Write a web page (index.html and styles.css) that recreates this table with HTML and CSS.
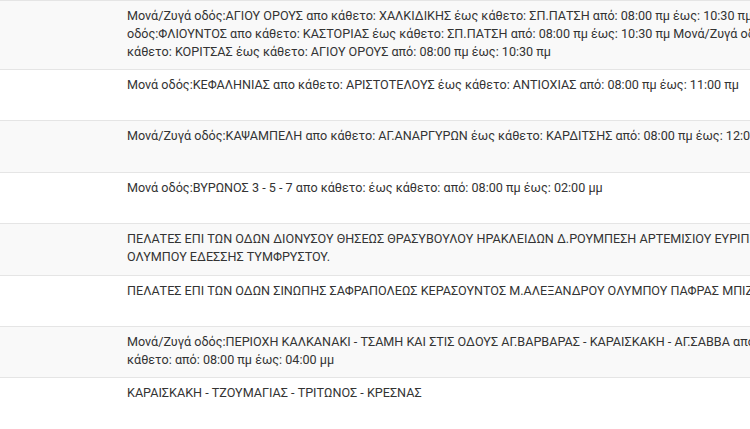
FILE: index.html
```html
<!DOCTYPE html>
<html lang="el">
<head>
    <meta charset="UTF-8">
    <meta name="viewport" content="width=device-width, initial-scale=1.0">
    <title>Ρυθμίσεις στάθμευσης</title>
    <link rel="stylesheet" href="styles.css">
</head>
<body>
    <div class="wrapper">
        <table class="zones">
            <tbody>
                <tr>
                    <td class="zone-id"></td>
                    <td class="zone-desc">Μονά/Ζυγά οδός:ΑΓΙΟΥ ΟΡΟΥΣ απο κάθετο: ΧΑΛΚΙΔΙΚΗΣ έως κάθετο: ΣΠ.ΠΑΤΣΗ από: 08:00 πμ έως: 10:30 πμ Μονά/Ζυγά οδός:ΦΛΙΟΥΝΤΟΣ απο κάθετο: ΚΑΣΤΟΡΙΑΣ έως κάθετο: ΣΠ.ΠΑΤΣΗ από: 08:00 πμ έως: 10:30 πμ Μονά/Ζυγά οδός:ΠΑΡΝΗΘΟΣ απο κάθετο: ΚΟΡΙΤΣΑΣ έως κάθετο: ΑΓΙΟΥ ΟΡΟΥΣ από: 08:00 πμ έως: 10:30 πμ</td>
                </tr>
                <tr>
                    <td class="zone-id"></td>
                    <td class="zone-desc">Μονά οδός:ΚΕΦΑΛΗΝΙΑΣ απο κάθετο: ΑΡΙΣΤΟΤΕΛΟΥΣ έως κάθετο: ΑΝΤΙΟΧΙΑΣ από: 08:00 πμ έως: 11:00 πμ</td>
                </tr>
                <tr>
                    <td class="zone-id"></td>
                    <td class="zone-desc">Μονά/Ζυγά οδός:ΚΑΨΑΜΠΕΛΗ απο κάθετο: ΑΓ.ΑΝΑΡΓΥΡΩΝ έως κάθετο: ΚΑΡΔΙΤΣΗΣ από: 08:00 πμ έως: 12:00 μμ</td>
                </tr>
                <tr>
                    <td class="zone-id"></td>
                    <td class="zone-desc">Μονά οδός:ΒΥΡΩΝΟΣ 3 - 5 - 7 απο κάθετο: έως κάθετο: από: 08:00 πμ έως: 02:00 μμ</td>
                </tr>
                <tr>
                    <td class="zone-id"></td>
                    <td class="zone-desc">ΠΕΛΑΤΕΣ ΕΠΙ ΤΩΝ ΟΔΩΝ ΔΙΟΝΥΣΟΥ ΘΗΣΕΩΣ ΘΡΑΣΥΒΟΥΛΟΥ ΗΡΑΚΛΕΙΔΩΝ Δ.ΡΟΥΜΠΕΣΗ ΑΡΤΕΜΙΣΙΟΥ ΕΥΡΙΠΙΔΟΥ ΣΤΑΔΙΟΥ ΟΛΥΜΠΟΥ ΕΔΕΣΣΗΣ ΤΥΜΦΡΥΣΤΟΥ.</td>
                </tr>
                <tr>
                    <td class="zone-id"></td>
                    <td class="zone-desc">ΠΕΛΑΤΕΣ ΕΠΙ ΤΩΝ ΟΔΩΝ ΣΙΝΩΠΗΣ ΣΑΦΡΑΠΟΛΕΩΣ ΚΕΡΑΣΟΥΝΤΟΣ Μ.ΑΛΕΞΑΝΔΡΟΥ ΟΛΥΜΠΟΥ ΠΑΦΡΑΣ ΜΠΙΖΑΝΙΟΥ</td>
                </tr>
                <tr>
                    <td class="zone-id"></td>
                    <td class="zone-desc">Μονά/Ζυγά οδός:ΠΕΡΙΟΧΗ ΚΑΛΚΑΝΑΚΙ - ΤΣΑΜΗ ΚΑΙ ΣΤΙΣ ΟΔΟΥΣ ΑΓ.ΒΑΡΒΑΡΑΣ - ΚΑΡΑΙΣΚΑΚΗ - ΑΓ.ΣΑΒΒΑ απο κάθετο: έως κάθετο: από: 08:00 πμ έως: 04:00 μμ</td>
                </tr>
                <tr>
                    <td class="zone-id"></td>
                    <td class="zone-desc">ΚΑΡΑΙΣΚΑΚΗ - ΤΖΟΥΜΑΓΙΑΣ - ΤΡΙΤΩΝΟΣ - ΚΡΕΣΝΑΣ</td>
                </tr>
            </tbody>
        </table>
    </div>
</body>
</html>
```

FILE: styles.css
```css
/* Global Styles */
body {
    margin: 0;
    background-color: #FFFFFF;
    font-family: Roboto, 'Liberation Sans', sans-serif;
    font-size: 12.6px;
    color: #333333;
    overflow: hidden;
}

.wrapper {
    width: 874px;
}

/* Table */
.zones {
    width: 874px;
    border-collapse: collapse;
    border-spacing: 0;
}

.zones td {
    padding: 6px 8px 8px;
    line-height: 18px;
    vertical-align: top;
    border-top: 1px solid #E5E5E5;
}

.zones tr:nth-child(odd) {
    background-color: #F9F9F9; /* striped rows */
}

.zones tr {
    height: 51.4px;
}

.zone-id {
    width: 103px;
}
```
